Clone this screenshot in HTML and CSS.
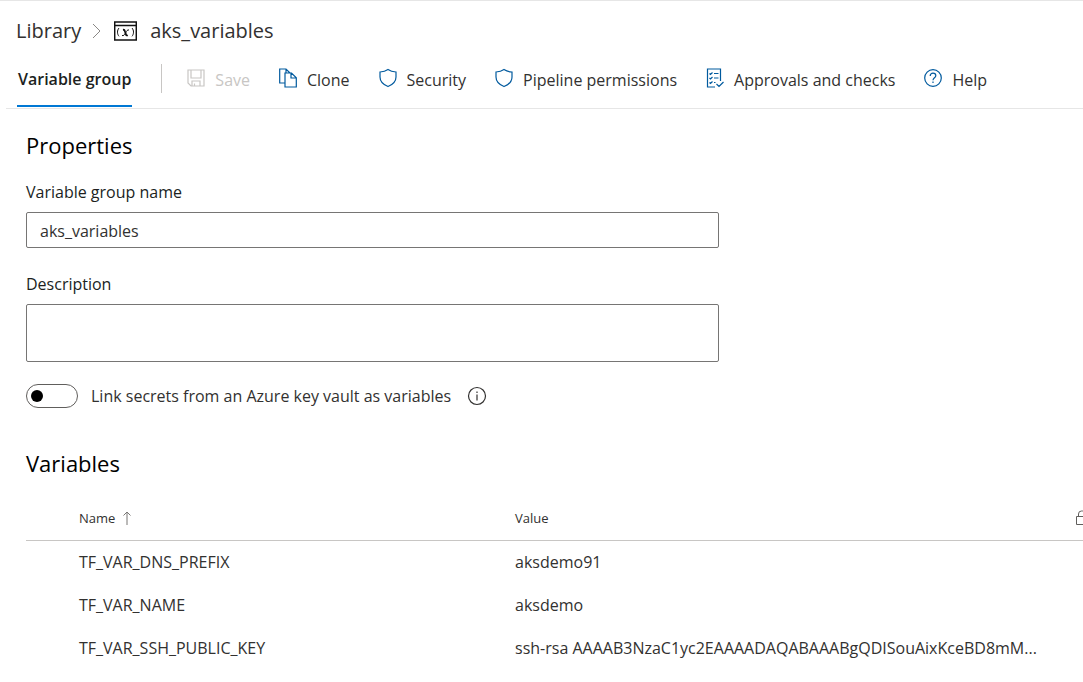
FILE: index.html
```html
<!DOCTYPE html>
<html lang="en">
<head>
<meta charset="utf-8">
<meta name="viewport" content="width=device-width, initial-scale=1">
<title>aks_variables - Library</title>
<link rel="stylesheet" href="styles.css">
</head>
<body>
<header class="header">
  <nav class="breadcrumb" aria-label="Breadcrumb">
    <a class="crumb" href="#library">Library</a>
    <svg class="chevron" width="10" height="16" viewBox="0 0 10 16" aria-hidden="true"><path d="M1 1l7 7-7 7"/></svg>
    <svg class="group-icon" width="23" height="20" viewBox="0 0 23 20" aria-hidden="true">
      <path d="M.7 1h21.600v18H.7zM.7 4.500h21.600"/>
      <path class="thin" d="M5 7c-2 2.300-2 6 0 8.300M18 7c2 2.300 2 6 0 8.300M8 14.500c1.500.5 2.500-.5 3.500-2.500s2-3.500 3.500-3"/>
      <path class="stem" d="M9 8.800c1.200-.2 1.700.5 2 1.700l.8 2.500c.3 1.300.9 1.700 2 1.200"/>
    </svg>
    <h1 class="title">aks_variables</h1>
  </nav>
  <div class="toolbar">
    <button class="tab" type="button">Variable group</button>
    <span class="divider"></span>
    <div class="commands">
      <button class="command" type="button" disabled>
        <svg class="icon" width="18" height="18" viewBox="0 0 18 18" aria-hidden="true"><path d="M1 1h16v16H4l-3-3zM4 1v8h10V1M5 17v-5h8v5M7.500 17v-2.500"/></svg>Save</button>
      <button class="command" type="button">
        <svg class="icon" width="18" height="20" viewBox="0 0 18 20" aria-hidden="true"><path d="M6 15H.7V1H7l4 4M6 5h6.500l4.800 4.800V19H6zM12 5v5h5M7 1v4"/></svg>Clone</button>
      <button class="command" type="button">
        <svg class="icon" width="18" height="20" viewBox="0 0 18 20" aria-hidden="true"><path d="M9 1.500c2.500 1.700 5 2.300 8 2.500v5c0 4.500-3 7.500-8 9.500-5-2-8-5-8-9.500V4c3-.2 5.500-.8 8-2.500z"/></svg>Security</button>
      <button class="command" type="button">
        <svg class="icon" width="18" height="20" viewBox="0 0 18 20" aria-hidden="true"><path d="M9 1.500c2.500 1.700 5 2.300 8 2.500v5c0 4.500-3 7.500-8 9.500-5-2-8-5-8-9.500V4c3-.2 5.500-.8 8-2.500z"/></svg>Pipeline permissions</button>
      <button class="command" type="button">
        <svg class="icon" width="18" height="20" viewBox="0 0 18 20" aria-hidden="true"><path d="M9 19H1.500V1h13v12M8 5.500h4.500M8 10h4.500M8 14.500h1.500M3.500 5.500l1 1 2-2M3.500 10l1 1 2-2M3.500 14.500l1 1 2-2M10.500 16l2.500 2.500 4.500-4.500"/></svg>Approvals and checks</button>
      <button class="command" type="button">
        <svg class="icon" width="18" height="20" viewBox="1 0 18 20" aria-hidden="true"><circle cx="10" cy="10" r="8.300"/><path d="M7.200 8c0-1.800 1.200-2.800 2.800-2.800s2.800 1 2.800 2.500c0 2-2.800 2.200-2.800 4.500M10 13.600v1.500"/></svg>Help</button>
    </div>
  </div>
</header>
<main class="content">
  <section class="properties">
    <h2 class="heading">Properties</h2>
    <label class="label" for="group-name">Variable group name</label>
    <input class="field" id="group-name" type="text" value="aks_variables">
    <label class="label" for="description">Description</label>
    <textarea class="field area" id="description"></textarea>
    <div class="toggle-row">
      <input class="toggle" id="key-vault" type="checkbox" role="switch">
      <label class="toggle-label" for="key-vault">Link secrets from an Azure key vault as variables</label>
      <svg class="info" width="20" height="20" viewBox="0 0 20 20" role="img" aria-label="Information"><circle cx="10" cy="10" r="8.500"/><path d="M10 8.500v6M10 5.500v1.500"/></svg>
    </div>
  </section>
  <section class="variables">
    <h2 class="heading">Variables</h2>
    <table class="table">
      <colgroup><col class="col-select"><col class="col-name"><col class="col-value"><col class="col-lock"></colgroup>
      <thead>
        <tr>
          <th></th>
          <th scope="col"><span class="sort">Name <svg class="arrow" width="8" height="14" viewBox="0 0 8 14" aria-hidden="true"><path d="M4 14V1M.5 4.500L4 1l3.500 3.500"/></svg></span></th>
          <th scope="col">Value</th>
          <th scope="col" aria-label="Secret"><svg class="lock" width="12" height="16" viewBox="0 0 12 16" aria-hidden="true"><path d="M.5 6.500h11v8H.5zM2.500 6.500V4a3 3 0 0 1 3-3h1a3 3 0 0 1 3 3v2.500"/></svg></th>
        </tr>
      </thead>
      <tbody>
        <tr><td></td><td>TF_VAR_DNS_PREFIX</td><td>aksdemo91</td><td></td></tr>
        <tr><td></td><td>TF_VAR_NAME</td><td>aksdemo</td><td></td></tr>
        <tr><td></td><td>TF_VAR_SSH_PUBLIC_KEY</td><td>ssh-rsa AAAAB3NzaC1yc2EAAAADAQABAAABgQDISouAixKceBD8mM...</td><td></td></tr>
      </tbody>
    </table>
  </section>
</main>
</body>
</html>
```
FILE: styles.css
```css
* {
  box-sizing: border-box;
}

body {
  margin: 0;
  border-top: 1px solid #e6e6e6;
  background: #fff;
  color: #323130;
  font: 16px/24px "Open Sans", "Noto Sans", sans-serif;
  overflow-x: hidden;
}

button,
input,
textarea {
  font: inherit;
  color: inherit;
}

svg {
  flex: none;
  fill: none;
  stroke: currentColor;
}

.header {
  margin-left: 6px;
  border-bottom: 1px solid #e6e6e6;
}

.breadcrumb {
  display: flex;
  align-items: center;
  padding: 14px 10px 0;
  font-size: 20px;
  line-height: 32px;
}

.crumb {
  color: inherit;
  text-decoration: none;
}

.chevron {
  margin: 0 12px 0 11px;
  color: #8a8886;
}

.group-icon {
  margin-right: 13px;
  color: #111;
  stroke-width: 1.5;
}

.thin {
  stroke-width: 1;
}

.stem {
  stroke-width: 1.8;
}

.title {
  margin: 0;
  font: inherit;
}

.toolbar {
  display: flex;
  align-items: center;
  height: 61px;
  padding-left: 11px;
}

.tab {
  flex: none;
  height: 54px;
  align-self: flex-end;
  margin-bottom: 1px;
  padding: 0 1px;
  border: 0;
  border-bottom: 2px solid #0078d4;
  background: none;
  color: #201f1e;
  font-weight: 600;
  white-space: nowrap;
}

.divider {
  width: 1px;
  height: 29px;
  margin: 2px 25px 0 29px;
  background: #c8c6c4;
}

.commands {
  display: flex;
  gap: 29px;
  padding-top: 4px;
}

.command {
  display: flex;
  align-items: center;
  gap: 10px;
  padding: 0;
  border: 0;
  background: none;
  white-space: nowrap;
}

.command:disabled {
  color: #c8c6c4;
}

.icon {
  margin-bottom: 3px;
  color: #005a9e;
  stroke-width: 1.2;
}

.command:disabled .icon {
  color: inherit;
}

.content {
  padding-left: 26px;
}

.properties {
  max-width: 693px;
  padding-top: 19px;
}

.heading {
  margin: 0;
  color: #000;
  font-size: 22px;
  font-weight: 400;
  line-height: 34px;
}

.label {
  display: block;
  margin: 18px 0 8px;
  color: #201f1e;
}

.field {
  display: block;
  width: 100%;
  height: 36px;
  padding: 2px 13px 0;
  border: 1px solid #767574;
  border-radius: 2px;
  background: #fff;
}

.field + .label {
  margin-top: 24px;
}

.area {
  height: 58px;
  resize: none;
}

.toggle-row {
  display: flex;
  align-items: center;
  padding-top: 22px;
}

.toggle {
  display: flex;
  align-items: center;
  width: 52px;
  height: 24px;
  margin: 0 13px 0 0;
  padding: 0 4px;
  border: 1px solid #605e5c;
  border-radius: 12px;
  appearance: none;
}

.toggle::before {
  content: "";
  width: 12px;
  height: 12px;
  border-radius: 50%;
  background: #000;
}

.toggle:checked {
  justify-content: flex-end;
}

.info {
  margin-left: 16px;
  stroke-width: 1.2;
}

.variables {
  padding-top: 38px;
}

.table {
  width: 100%;
  min-width: 1091px;
  margin-top: 14px;
  border-collapse: collapse;
  table-layout: fixed;
}

.col-select {
  width: 53px;
}

.col-name {
  width: 436px;
}

.col-value {
  width: 561px;
}

th,
td {
  height: 43px;
  padding: 0;
  font-weight: 400;
  text-align: left;
  white-space: nowrap;
}

th {
  height: 46px;
  padding-top: 2px;
  border-bottom: 1px solid #c8c6c4;
  font-size: 13px;
}

.sort {
  display: flex;
  align-items: center;
  gap: 8px;
}

.arrow {
  color: #797775;
}

.lock {
  display: block;
  color: #605e5c;
}
```
